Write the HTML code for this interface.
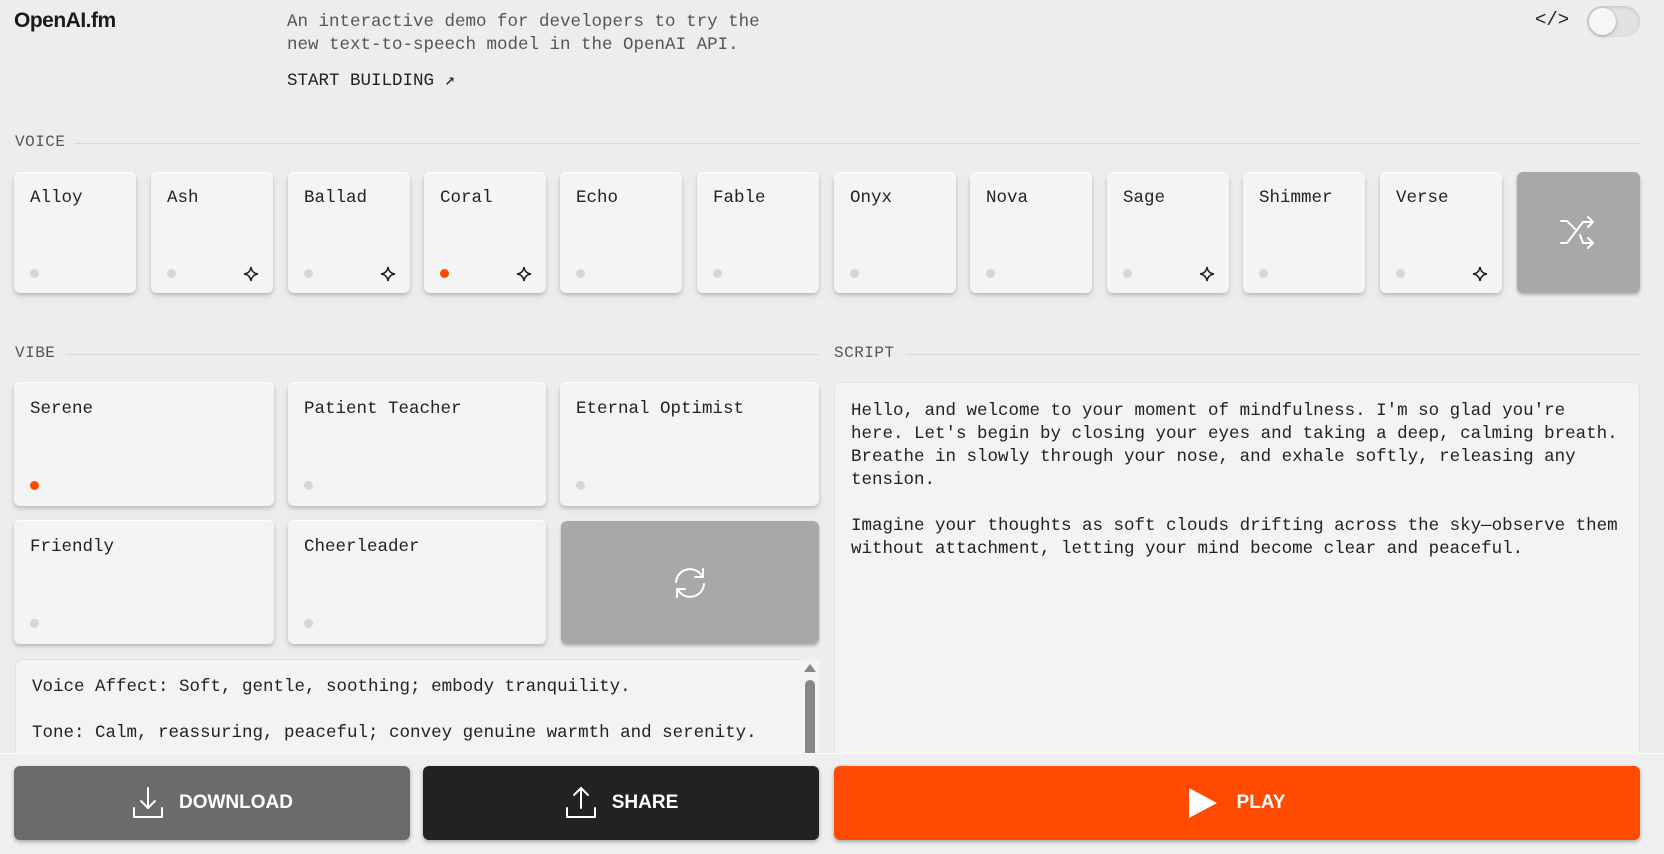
<!DOCTYPE html>
<html><head><meta charset="utf-8"><style>
*{box-sizing:border-box;margin:0;padding:0}
body{width:1664px;height:854px;overflow:hidden;background:#ededed;font-family:"Liberation Mono",monospace;color:#1a1a1a;position:relative}
.a{position:absolute}
.mono{font-family:"Liberation Mono",monospace}
.lbl{font-size:16px;color:#555;letter-spacing:0.5px}
.line{height:1px;background:#d8d8d8}
.card{position:absolute;background:#f4f4f4;border-radius:6px;box-shadow:0 2px 3px rgba(0,0,0,.18),0 4px 10px rgba(0,0,0,.06),inset 0 1px 0 #fff}
.card .n{position:absolute;left:16px;top:16px;font-size:17.5px;color:#222}
.vc .n{top:17px}
.dot{position:absolute;width:9px;height:9px;border-radius:50%;background:#d6d6d6}
.dot.on{background:#ff4a00}
.sp{position:absolute}
.grey{background:#a8a8a8;box-shadow:0 2px 3px rgba(0,0,0,.25)}
.btn{position:absolute;top:766px;height:74px;border-radius:6px;color:#fff;font-family:"Liberation Sans",sans-serif;font-size:19px;font-weight:bold;display:flex;align-items:center;justify-content:center;gap:14px;box-shadow:0 2px 4px rgba(0,0,0,.3)}
</style></head><body>
<div class="a" style="left:14px;top:9px;font-family:'Liberation Sans',sans-serif;font-weight:bold;font-size:21px;letter-spacing:-0.5px">OpenAI.fm</div>
<div class="a mono" style="left:287px;top:11px;font-size:17.5px;line-height:23px;color:#555">An interactive demo for developers to try the<br>new text-to-speech model in the OpenAI API.</div>
<div class="a mono" style="left:287px;top:70px;font-size:17.5px;color:#222">START BUILDING ↗</div>
<div class="a mono" style="left:1535px;top:9px;font-size:19px;color:#222">&lt;/&gt;</div>
<div class="a" style="left:1587px;top:6px;width:53px;height:31px;border-radius:16px;background:#e2e2e2;box-shadow:inset 0 1px 3px rgba(0,0,0,.15)"><div style="position:absolute;left:2px;top:2px;width:27px;height:27px;border-radius:50%;background:#f7f7f7;box-shadow:0 1px 3px rgba(0,0,0,.3)"></div></div>

<div class="a lbl" style="left:15px;top:133px">VOICE</div>
<div class="a line" style="left:74px;top:143px;width:1566px"></div>

<div class="card" style="left:14px;top:172px;width:122px;height:121px"><span class="n">Alloy</span><span class="dot" style="left:16px;top:97px"></span></div>
<div class="card" style="left:151px;top:172px;width:122px;height:121px"><span class="n">Ash</span><span class="dot" style="left:16px;top:97px"></span><svg class="sp" style="left:92px;top:94px" width="16" height="16" viewBox="0 0 16 16"><path d="M8 1Q8.8 7.2 15 8Q8.8 8.8 8 15Q7.2 8.8 1 8Q7.2 7.2 8 1Z" fill="none" stroke="#222" stroke-width="1.5"/></svg></div>
<div class="card" style="left:288px;top:172px;width:122px;height:121px"><span class="n">Ballad</span><span class="dot" style="left:16px;top:97px"></span><svg class="sp" style="left:92px;top:94px" width="16" height="16" viewBox="0 0 16 16"><path d="M8 1Q8.8 7.2 15 8Q8.8 8.8 8 15Q7.2 8.8 1 8Q7.2 7.2 8 1Z" fill="none" stroke="#222" stroke-width="1.5"/></svg></div>
<div class="card" style="left:424px;top:172px;width:122px;height:121px"><span class="n">Coral</span><span class="dot on" style="left:16px;top:97px"></span><svg class="sp" style="left:92px;top:94px" width="16" height="16" viewBox="0 0 16 16"><path d="M8 1Q8.8 7.2 15 8Q8.8 8.8 8 15Q7.2 8.8 1 8Q7.2 7.2 8 1Z" fill="none" stroke="#222" stroke-width="1.5"/></svg></div>
<div class="card" style="left:560px;top:172px;width:122px;height:121px"><span class="n">Echo</span><span class="dot" style="left:16px;top:97px"></span></div>
<div class="card" style="left:697px;top:172px;width:122px;height:121px"><span class="n">Fable</span><span class="dot" style="left:16px;top:97px"></span></div>
<div class="card" style="left:834px;top:172px;width:122px;height:121px"><span class="n">Onyx</span><span class="dot" style="left:16px;top:97px"></span></div>
<div class="card" style="left:970px;top:172px;width:122px;height:121px"><span class="n">Nova</span><span class="dot" style="left:16px;top:97px"></span></div>
<div class="card" style="left:1107px;top:172px;width:122px;height:121px"><span class="n">Sage</span><span class="dot" style="left:16px;top:97px"></span><svg class="sp" style="left:92px;top:94px" width="16" height="16" viewBox="0 0 16 16"><path d="M8 1Q8.8 7.2 15 8Q8.8 8.8 8 15Q7.2 8.8 1 8Q7.2 7.2 8 1Z" fill="none" stroke="#222" stroke-width="1.5"/></svg></div>
<div class="card" style="left:1243px;top:172px;width:122px;height:121px"><span class="n">Shimmer</span><span class="dot" style="left:16px;top:97px"></span></div>
<div class="card" style="left:1380px;top:172px;width:122px;height:121px"><span class="n">Verse</span><span class="dot" style="left:16px;top:97px"></span><svg class="sp" style="left:92px;top:94px" width="16" height="16" viewBox="0 0 16 16"><path d="M8 1Q8.8 7.2 15 8Q8.8 8.8 8 15Q7.2 8.8 1 8Q7.2 7.2 8 1Z" fill="none" stroke="#222" stroke-width="1.5"/></svg></div>
<div class="card grey" style="left:1517px;top:172px;width:123px;height:121px"><svg style="position:absolute;left:42px;top:42px" width="38" height="36" viewBox="0 0 38 36" fill="none" stroke="#fff" stroke-width="2" stroke-linecap="round" stroke-linejoin="round"><path d="M2 7h6l8 8"/><path d="M2 29h6L24 8h10"/><path d="M29 3l5 5-5 5"/><path d="M21 21l3 8h10"/><path d="M29 24l5 5-5 5"/></svg></div>

<div class="a lbl" style="left:15px;top:344px">VIBE</div>
<div class="a line" style="left:66px;top:354px;width:753px"></div>
<div class="a lbl" style="left:834px;top:344px">SCRIPT</div>
<div class="a line" style="left:906px;top:354px;width:734px"></div>

<div class="card vc" style="left:14px;top:382px;width:260px;height:124px"><span class="n">Serene</span><span class="dot on" style="left:16px;top:99px"></span></div>
<div class="card vc" style="left:288px;top:382px;width:258px;height:124px"><span class="n">Patient Teacher</span><span class="dot" style="left:16px;top:99px"></span></div>
<div class="card vc" style="left:560px;top:382px;width:259px;height:124px"><span class="n">Eternal Optimist</span><span class="dot" style="left:16px;top:99px"></span></div>
<div class="card vc" style="left:14px;top:520px;width:260px;height:124px"><span class="n">Friendly</span><span class="dot" style="left:16px;top:99px"></span></div>
<div class="card vc" style="left:288px;top:520px;width:258px;height:124px"><span class="n">Cheerleader</span><span class="dot" style="left:16px;top:99px"></span></div>
<div class="card grey" style="left:561px;top:521px;width:258px;height:123px"><svg style="position:absolute;left:112px;top:45px" width="34" height="34" viewBox="0 0 34 34" fill="none" stroke="#fff" stroke-width="2" stroke-linecap="round" stroke-linejoin="round"><path d="M3 16A14 14 0 0 1 29 10"/><path d="M30 3v8h-8"/><path d="M31 18A14 14 0 0 1 5 24"/><path d="M4 31v-8h8"/></svg></div>

<div class="a" style="left:15px;top:659px;width:804px;height:120px;background:#f3f3f3;border:1px solid #e2e2e2;border-radius:6px 6px 0 0"></div>
<div class="a mono" style="left:32px;top:664px;font-size:17.5px;line-height:46px;color:#222">Voice Affect: Soft, gentle, soothing; embody tranquility.<br>Tone: Calm, reassuring, peaceful; convey genuine warmth and serenity.</div>
<div class="a" style="left:802px;top:659px;width:17px;height:100px;background:#f3f3f3"></div>
<div class="a" style="left:804px;top:664px;width:0;height:0;border-left:6px solid transparent;border-right:6px solid transparent;border-bottom:8px solid #888"></div>
<div class="a" style="left:805px;top:680px;width:10px;height:80px;border-radius:5px;background:#888"></div>

<div class="a" style="left:834px;top:382px;width:806px;height:400px;background:#f3f3f3;border:1px solid #e2e2e2;border-radius:6px"></div>
<div class="a mono" style="left:851px;top:400px;font-size:17.5px;line-height:23px;color:#222;width:780px">Hello, and welcome to your moment of mindfulness. I'm so glad you're<br>here. Let's begin by closing your eyes and taking a deep, calming breath.<br>Breathe in slowly through your nose, and exhale softly, releasing any<br>tension.<br><br>Imagine your thoughts as soft clouds drifting across the sky—observe them<br>without attachment, letting your mind become clear and peaceful.</div>

<div class="a" style="left:0;top:753px;width:1664px;height:101px;background:#efefef;border-top:1px solid #fafafa"></div>
<div class="btn" style="left:14px;width:396px;background:#6b6b6b"><svg width="34" height="34" viewBox="0 0 34 34" fill="none" stroke="#fff" stroke-width="2" stroke-linecap="round" stroke-linejoin="round"><path d="M17 2v20"/><path d="M10 15l7 7 7-7"/><path d="M3 22v9h28v-9"/></svg><span>DOWNLOAD</span></div>
<div class="btn" style="left:423px;width:396px;background:#222"><svg width="34" height="34" viewBox="0 0 34 34" fill="none" stroke="#fff" stroke-width="2" stroke-linecap="round" stroke-linejoin="round"><path d="M17 22V2"/><path d="M10 9l7-7 7 7"/><path d="M3 22v9h28v-9"/></svg><span>SHARE</span></div>
<div class="btn" style="left:834px;width:806px;background:#ff4a00;gap:20px"><svg width="28" height="30" viewBox="0 0 28 30"><path d="M0 0L28 15L0 30Z" fill="#fff"/></svg><span>PLAY</span></div>
</body></html>
